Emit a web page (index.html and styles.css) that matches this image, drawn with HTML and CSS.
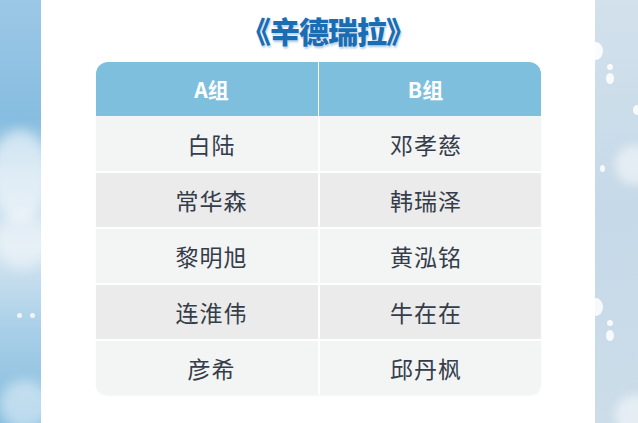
FILE: index.html
```html
<!DOCTYPE html>
<html lang="zh">
<head>
<meta charset="utf-8">
<link rel="stylesheet" href="styles.css">
</head>
<body>
<div class="page">
  <aside class="side side-left">
    <span class="cloud c1"></span><span class="cloud c2"></span><span class="cloud c3"></span>
    <span class="dot d1"></span><span class="dot d2"></span>
  </aside>
  <main class="panel">
    <h1 class="title">《辛德瑞拉》</h1>
    <div class="table">
      <div class="row head">
        <div class="cell a">A组</div>
        <div class="cell b">B组</div>
      </div>
      <div class="row light">
        <div class="cell a">白陆</div>
        <div class="cell b">邓孝慈</div>
      </div>
      <div class="row dark">
        <div class="cell a">常华森</div>
        <div class="cell b">韩瑞泽</div>
      </div>
      <div class="row light">
        <div class="cell a">黎明旭</div>
        <div class="cell b">黄泓铭</div>
      </div>
      <div class="row dark">
        <div class="cell a">连淮伟</div>
        <div class="cell b">牛在在</div>
      </div>
      <div class="row light last">
        <div class="cell a">彦希</div>
        <div class="cell b">邱丹枫</div>
      </div>
    </div>
  </main>
  <aside class="side side-right">
    <span class="bubble b1"></span><span class="bubble b2"></span><span class="bubble b3"></span>
    <span class="bubble b4"></span><span class="bubble b5"></span><span class="bubble b6"></span>
    <span class="bubble b7"></span><span class="bubble b8"></span>
    <span class="haze h1"></span><span class="haze h2"></span>
  </aside>
</div>
</body>
</html>
```

FILE: styles.css
```css
html, body {
  margin: 0;
  padding: 0;
  background: #ffffff;
}
body {
  width: 638px;
  height: 423px;
  overflow: hidden;
  font-family: "Noto Sans CJK SC", "Noto Sans", sans-serif;
}
.page {
  display: flex;
  width: 638px;
  height: 423px;
}
.side {
  position: relative;
  overflow: hidden;
  flex: none;
}
.side-left {
  width: 41px;
  background: linear-gradient(180deg, #9cc8e6 0%, #86bde0 28%, #b9d6ea 42%, #d7e6f1 58%, #a9cfe8 78%, #84bddf 100%);
}
.side-right {
  width: 43px;
  background: linear-gradient(180deg, #d2e1ec 0%, #c6d9e8 50%, #ccdde9 100%);
}
.cloud {
  position: absolute;
  border-radius: 50%;
  background: rgba(255,255,255,0.55);
  filter: blur(6px);
}
.c1 { left: -10px; top: 130px; width: 60px; height: 90px; }
.c2 { left: -5px; top: 210px; width: 55px; height: 60px; background: rgba(255,255,255,0.4); }
.c3 { left: 0px; top: 380px; width: 50px; height: 50px; background: rgba(255,255,255,0.45); }
.dot {
  position: absolute;
  width: 5px; height: 5px;
  border-radius: 50%;
  background: rgba(255,255,255,0.8);
}
.d1 { left: 17px; top: 313px; }
.d2 { left: 30px; top: 313px; }
.bubble {
  position: absolute;
  border-radius: 50%;
  background: rgba(255,255,255,0.85);
}
.b1 { left: -6px; top: 42px; width: 14px; height: 18px; background: rgba(255,255,255,0.9); }
.b2 { left: 12px; top: 64px; width: 6px; height: 6px; }
.b3 { left: 11px; top: 73px; width: 8px; height: 11px; }
.b4 { left: 38px; top: 105px; width: 8px; height: 10px; }
.b5 { left: 5px; top: 165px; width: 5px; height: 7px; }
.b6 { left: -6px; top: 298px; width: 14px; height: 18px; }
.b7 { left: 12px; top: 320px; width: 6px; height: 6px; }
.b8 { left: 11px; top: 330px; width: 8px; height: 11px; }
.haze {
  position: absolute;
  border-radius: 50%;
  background: rgba(255,255,255,0.5);
  filter: blur(5px);
}
.h1 { left: 20px; top: 145px; width: 40px; height: 40px; }
.h2 { left: 20px; top: 395px; width: 40px; height: 40px; }

.panel {
  flex: 1;
  display: flex;
  flex-direction: column;
  align-items: center;
}
.title {
  margin: 11px 0 0 20px;
  height: 38px;
  font-size: 30px;
  line-height: 38px;
  font-weight: 900;
  color: #1b6db3;
  letter-spacing: -1px;
  text-shadow: 0 0 1px #fff, 1px 2px 2px rgba(120, 170, 215, 0.55);
}
.table {
  margin-top: 13px;
  width: 445px;
  border-radius: 12px 12px 10px 10px;
  overflow: hidden;
  background: #ffffff;
  box-shadow: 0 1px 2px rgba(0,0,0,0.04);
}
.row {
  display: grid;
  grid-template-columns: 222px 1fr;
  column-gap: 2px;
  height: 54px;
  border-bottom: 2px solid #ffffff;
  background: #ffffff;
}
.row.last { border-bottom: none; height: 54px; }
.cell {
  display: flex;
  align-items: center;
  justify-content: center;
  font-size: 23px;
  color: #353d4a;
  letter-spacing: 1px;
}
.cell.a { padding-left: 10px; }
.cell.b { padding-right: 8px; }
.light .cell { background: #f3f4f4; }
.dark .cell { background: #ebebeb; }
.head { height: 54px; column-gap: 1px; border-bottom: 1px solid #f4f6f7; }
.head .cell {
  background: #7fbfde;
  color: #ffffff;
  font-weight: 700;
  font-size: 21px;
  letter-spacing: 0;
}
```
